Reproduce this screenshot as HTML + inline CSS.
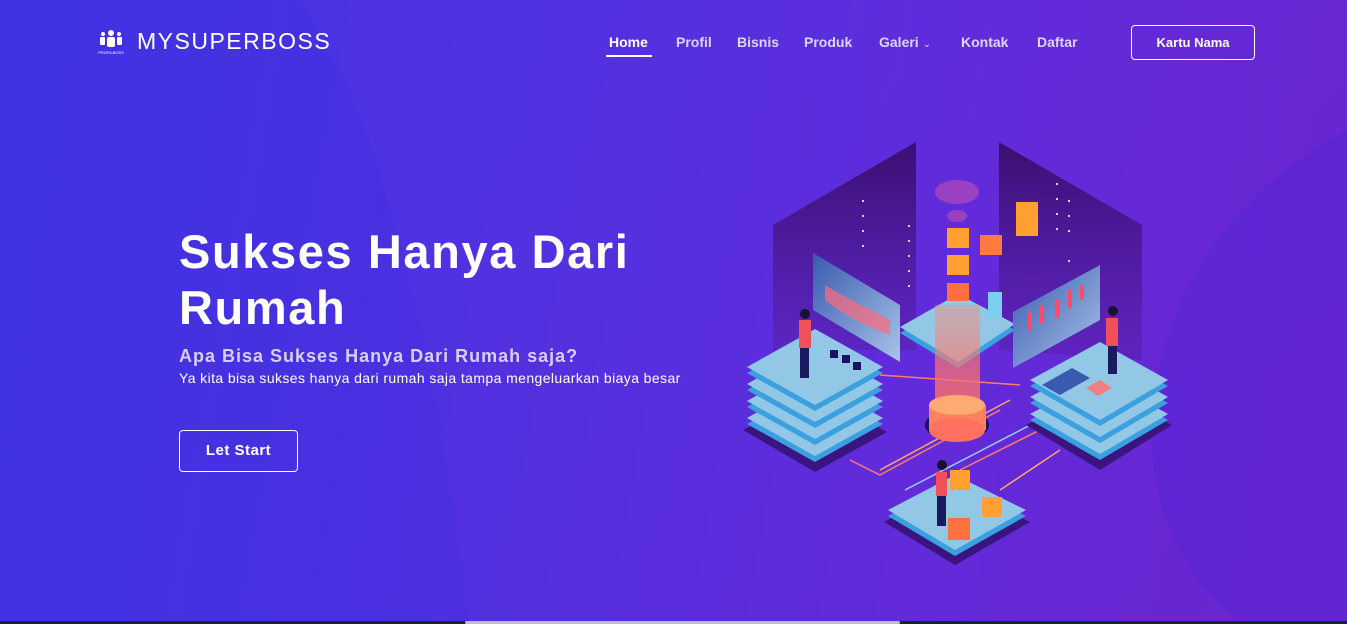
<!DOCTYPE html>
<html><head><meta charset="utf-8"><style>
*{margin:0;padding:0;box-sizing:border-box}
html,body{width:1347px;height:624px;overflow:hidden;font-family:"Liberation Sans",Arial,sans-serif}
.hero{position:absolute;left:0;top:0;width:1347px;height:621px;background:linear-gradient(100deg,#3d33e2 0%,#4b30e0 35%,#6228d8 70%,#6c22cc 100%);overflow:hidden}
.bg2{position:absolute;left:0;top:0;width:1347px;height:621px}
.logo{position:absolute;left:98px;top:28px;color:#fff}
.logo .t{position:absolute;left:39px;top:0;font-size:23px;letter-spacing:1.5px;font-weight:400;white-space:nowrap}
nav{position:absolute;top:34px;left:609px;color:#fff;font-size:14px;font-weight:bold}
nav span{position:absolute;white-space:nowrap;color:#ddd6fb}
nav .act{color:#fff}
.btn1{position:absolute;left:1131px;top:25px;width:124px;height:35px;border:1px solid #fff;border-radius:4px;color:#fff;font-size:13px;font-weight:bold;text-align:center;line-height:33px}
h1{position:absolute;left:179px;top:224px;color:#fff;font-size:47px;line-height:56px;font-weight:bold;letter-spacing:1.6px;width:540px}
.sub{position:absolute;left:179px;top:346px;color:#d8cff8;font-size:18px;font-weight:bold;letter-spacing:1px;white-space:nowrap}
.p{position:absolute;left:179px;top:370px;color:#fff;font-size:14px;letter-spacing:.4px;white-space:nowrap}
.btn2{position:absolute;left:179px;top:430px;width:119px;height:42px;border:1px solid #fff;border-radius:4px;color:#fff;font-size:15px;font-weight:bold;text-align:center;line-height:40px;letter-spacing:.5px}
.bottom{position:absolute;left:0;top:621px;width:1347px;height:3px;background:#1a2338}
.bar{position:absolute;left:465px;top:621px;width:435px;height:3px;background:#bfc0c4;border-radius:2px}
</style></head><body>
<div class="hero">
<svg class="bg2" width="1347" height="621">
<defs>
<linearGradient id="lg" x1="0" y1="0" x2="1" y2="1"><stop offset="0" stop-color="#5a38e6" stop-opacity=".6"/><stop offset="1" stop-color="#6a2fd8" stop-opacity=".3"/></linearGradient>
<linearGradient id="wall" x1="0" y1="0" x2="0" y2="1"><stop offset="0" stop-color="#3a0f70"/><stop offset="1" stop-color="#5a20b0" stop-opacity=".6"/></linearGradient>
<linearGradient id="cyl" x1="0" y1="0" x2="0" y2="1"><stop offset="0" stop-color="#ff8a70" stop-opacity=".4"/><stop offset="1" stop-color="#ff6a6a" stop-opacity=".9"/></linearGradient>
<linearGradient id="scr" x1="0" y1="0" x2="1" y2="1"><stop offset="0" stop-color="#3a5ab0"/><stop offset="1" stop-color="#a8c4e8"/></linearGradient>
</defs>
<path d="M300 0 C400 150 440 400 470 621 L1347 621 L1347 0 Z" fill="url(#lg)" opacity=".5"/>
<path d="M1240 621 C1100 520 1120 250 1347 130 L1347 621Z" fill="#5a24d4" opacity=".6"/>
<polygon points="773,225 916,142 916,350 773,350" fill="url(#wall)"/>
<polygon points="999,142 1142,225 1142,360 999,350" fill="url(#wall)"/>
<g fill="#fff" opacity=".8">
<rect x="862" y="200" width="2" height="2"/><rect x="862" y="215" width="2" height="2"/><rect x="862" y="230" width="2" height="2"/><rect x="862" y="245" width="2" height="2"/>
<rect x="908" y="225" width="2" height="2"/><rect x="908" y="240" width="2" height="2"/><rect x="908" y="255" width="2" height="2"/><rect x="908" y="270" width="2" height="2"/><rect x="908" y="285" width="2" height="2"/>
<rect x="1056" y="183" width="2" height="2"/><rect x="1056" y="198" width="2" height="2"/><rect x="1056" y="213" width="2" height="2"/><rect x="1056" y="228" width="2" height="2"/><rect x="1068" y="200" width="2" height="2"/><rect x="1068" y="215" width="2" height="2"/><rect x="1068" y="230" width="2" height="2"/><rect x="1068" y="260" width="2" height="2"/>
</g>
<g stroke-width="1.5" fill="none">
<path d="M850 460 L880 475 L1000 410" stroke="#ff7a6a"/>
<path d="M880 470 L1010 400" stroke="#f8a860"/>
<path d="M905 490 L1040 420" stroke="#9ad2f0"/>
<path d="M960 470 L1060 420" stroke="#ff7a6a"/>
<path d="M1000 490 L1060 450" stroke="#f8a860"/>
<path d="M880 375 L1020 385" stroke="#ff7a6a"/>
</g>
<g>
<polygon points="743,430 815,392 887,432 815,472" fill="#3a1580"/>
<polygon points="747,424 815,386 883,424 815,462" fill="#3aa0e0"/>
<polygon points="747,418 815,380 883,418 815,456" fill="#92c8e6"/>
<polygon points="747,407 815,369 883,407 815,445" fill="#3aa0e0"/>
<polygon points="747,401 815,363 883,401 815,439" fill="#92c8e6"/>
<polygon points="747,390 815,352 883,390 815,428" fill="#3aa0e0"/>
<polygon points="747,384 815,346 883,384 815,422" fill="#92c8e6"/>
<polygon points="747,373 815,335 883,373 815,411" fill="#3aa0e0"/>
<polygon points="747,367 815,329 883,367 815,405" fill="#92c8e6"/>
</g>
<g>
<polygon points="1026,425 1100,385 1172,425 1100,470" fill="#3a1580"/>
<polygon points="1030,420 1100,382 1168,420 1100,460" fill="#3aa0e0"/>
<polygon points="1030,414 1100,376 1168,414 1100,454" fill="#92c8e6"/>
<polygon points="1030,403 1100,365 1168,403 1100,443" fill="#3aa0e0"/>
<polygon points="1030,397 1100,359 1168,397 1100,437" fill="#92c8e6"/>
<polygon points="1030,386 1100,348 1168,386 1100,426" fill="#3aa0e0"/>
<polygon points="1030,380 1100,342 1168,380 1100,420" fill="#92c8e6"/>
<polygon points="1042,385 1072,368 1090,378 1060,395" fill="#3a5ab0"/>
<polygon points="1086,388 1100,380 1112,388 1098,396" fill="#f08080"/>
</g>
<polygon points="900,333 958,300 1015,330 958,368" fill="#3aa0e0"/>
<polygon points="900,327 958,294 1015,324 958,362" fill="#92c8e6"/>
<polygon points="884,522 955,485 1030,522 955,565" fill="#3a1580"/>
<polygon points="888,516 955,481 1026,516 955,556" fill="#3aa0e0"/>
<polygon points="888,510 955,475 1026,510 955,550" fill="#92c8e6"/>
<ellipse cx="957" cy="425" rx="32" ry="16" fill="#1a1260"/>
<rect x="935" y="305" width="45" height="110" fill="url(#cyl)"/>
<rect x="929" y="405" width="57" height="25" fill="#ff8060"/>
<ellipse cx="957" cy="430" rx="28" ry="12" fill="#ff7060"/>
<ellipse cx="957" cy="405" rx="28" ry="10" fill="#ffaa70"/>
<polygon points="813,253 900,305 900,362 813,310" fill="url(#scr)"/>
<path d="M825 285 Q850 300 890 320 L890 335 Q850 320 825 300Z" fill="#ff6a7a" opacity=".7"/>
<polygon points="1013,312 1100,265 1100,320 1013,368" fill="url(#scr)"/>
<g fill="#ff4a6a"><rect x="1028" y="312" width="4" height="18"/><rect x="1040" y="305" width="4" height="18"/><rect x="1055" y="300" width="4" height="18"/><rect x="1068" y="290" width="4" height="18"/><rect x="1080" y="285" width="4" height="15"/></g>
<ellipse cx="957" cy="192" rx="22" ry="12" fill="#c050b0" opacity=".6"/>
<ellipse cx="957" cy="216" rx="10" ry="6" fill="#c050b0" opacity=".6"/>
<g fill="#ffa030">
<rect x="947" y="228" width="22" height="20"/><rect x="947" y="255" width="22" height="20"/><rect x="980" y="235" width="22" height="20" fill="#ff7a40"/>
<rect x="1016" y="202" width="22" height="34"/><rect x="947" y="283" width="22" height="18" fill="#ff7040"/>
<rect x="950" y="470" width="20" height="20"/><rect x="982" y="497" width="20" height="20"/><rect x="948" y="518" width="22" height="22" fill="#ff7040"/>
</g>
<rect x="988" y="292" width="14" height="25" fill="#7ad0f0"/>
<g fill="#1a1260"><rect x="830" y="350" width="8" height="8"/><rect x="842" y="355" width="8" height="8"/><rect x="853" y="362" width="8" height="8"/></g>
<g><rect x="799" y="320" width="12" height="28" fill="#f0505a"/><rect x="800" y="348" width="9" height="30" fill="#1a1a60"/><circle cx="805" cy="314" r="5" fill="#1a1030"/></g>
<g><rect x="1106" y="318" width="12" height="28" fill="#f0505a"/><rect x="1108" y="346" width="9" height="28" fill="#1a1a60"/><circle cx="1113" cy="311" r="5" fill="#1a1030"/></g>
<g><rect x="936" y="472" width="11" height="24" fill="#f0505a"/><rect x="937" y="496" width="9" height="30" fill="#1a1a60"/><circle cx="942" cy="465" r="5" fill="#1a1030"/></g>
</svg>

<div class="logo">
<svg width="26" height="28" viewBox="0 0 26 28" style="position:absolute;left:0;top:0"><g fill="#fff"><circle cx="13" cy="5" r="3"/><rect x="9" y="9" width="8" height="10" rx="2"/><circle cx="5" cy="6" r="2"/><rect x="2" y="9" width="5" height="8" rx="1"/><circle cx="21" cy="6" r="2"/><rect x="19" y="9" width="5" height="8" rx="1"/></g><text x="13" y="26" font-size="4" fill="#fff" text-anchor="middle" font-family="Liberation Sans">PROFILBOSS</text></svg>
<div class="t">MYSUPERBOSS</div>
</div>
<nav>
<span class="act" style="left:0">Home</span>
<div style="position:absolute;left:-3px;top:21px;width:46px;height:2px;background:#fff"></div>
<span style="left:67px">Profil</span>
<span style="left:128px">Bisnis</span>
<span style="left:195px">Produk</span>
<span style="left:270px">Galeri <span style="position:static;font-weight:normal;font-size:10px">&#8964;</span></span>
<span style="left:352px">Kontak</span>
<span style="left:428px">Daftar</span>
</nav>
<div class="btn1">Kartu Nama</div>
<h1>Sukses Hanya Dari Rumah</h1>
<div class="sub">Apa Bisa Sukses Hanya Dari Rumah saja?</div>
<div class="p">Ya kita bisa sukses hanya dari rumah saja tampa mengeluarkan biaya besar</div>
<div class="btn2">Let Start</div>
</div>
<div class="bottom"></div><div class="bar"></div>
</body></html>
